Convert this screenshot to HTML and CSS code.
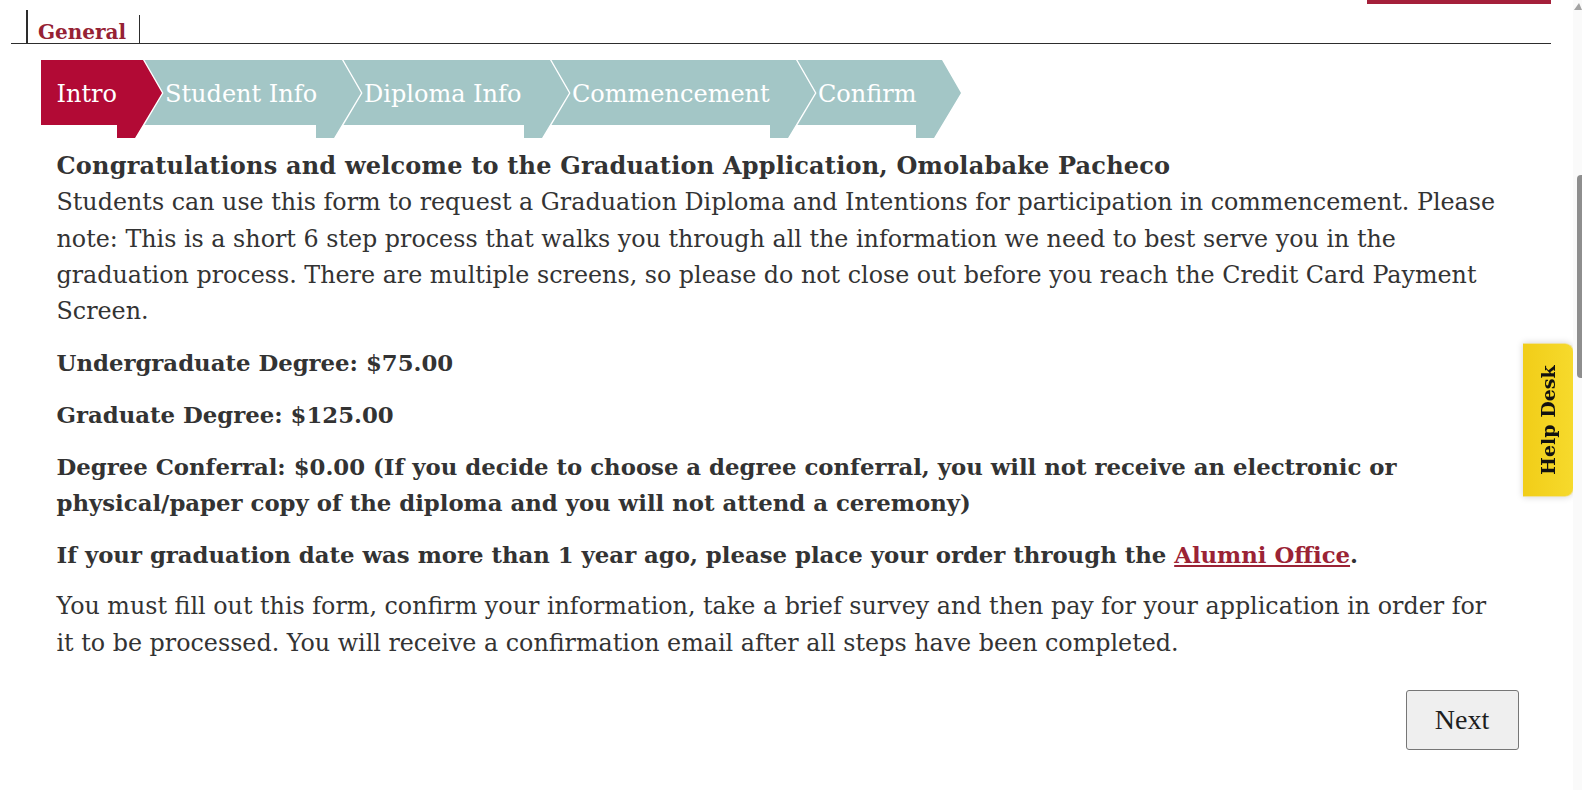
FILE: index.html
```html
<!DOCTYPE html>
<html lang="en">
<head>
<meta charset="utf-8">
<title>Graduation Application</title>
<link rel="stylesheet" href="styles.css">
</head>
<body>
<div class="page">
  <div class="accent-row"><span class="accent"></span></div>
  <div class="tabs">
    <span class="tab-edge"></span>
    <a class="tab" href="#">General</a>
  </div>
  <nav class="steps">
    <div class="step s1 active"><span>Intro</span></div>
    <div class="step s2"><span>Student Info</span></div>
    <div class="step s3"><span>Diploma Info</span></div>
    <div class="step s4"><span>Commencement</span></div>
    <div class="step s5"><span>Confirm</span></div>
  </nav>
  <div class="content">
    <p class="lead"><strong class="title">Congratulations and welcome to the Graduation Application, Omolabake Pacheco</strong>Students can use this form to request a Graduation Diploma and Intentions for participation in commencement. Please note: This is a short 6 step process that walks you through all the information we need to best serve you in the graduation process. There are multiple screens, so please do not close out before you reach the Credit Card Payment Screen.</p>
    <p class="b">Undergraduate Degree: $75.00</p>
    <p class="b">Graduate Degree: $125.00</p>
    <p class="b">Degree Conferral: $0.00 (If you decide to choose a degree conferral, you will not receive an electronic or physical/paper copy of the diploma and you will not attend a ceremony)</p>
    <p class="b">If your graduation date was more than 1 year ago, please place your order through the <a href="#">Alumni Office</a>.</p>
    <p class="last">You must fill out this form, confirm your information, take a brief survey and then pay for your application in order for it to be processed. You will receive a confirmation email after all steps have been completed.</p>
  </div>
  <div class="actions"><button type="button" class="btn">Next</button></div>
</div>
<div class="help">Help Desk</div>
<div class="scrollbar">
  <svg class="scroll-arrow" width="9" height="12" viewBox="0 0 9 12"><polygon points="1,10 6,3 9,10" fill="#a3a3a3"/></svg>
  <span class="thumb"></span>
</div>
</body>
</html>
```
FILE: styles.css
```css
html, body {
  margin: 0;
  padding: 0;
  overflow: hidden;
  background: #fff;
}
body {
  font-family: "DejaVu Serif", "Liberation Serif", serif;
  color: #333;
}
.page {
  width: 1540px;
  margin-left: 11px;
}
.accent-row {
  display: flex;
  justify-content: flex-end;
  height: 4px;
}
.accent {
  width: 184px;
  height: 4px;
  background: #a4203a;
}
.tabs {
  display: flex;
  align-items: flex-end;
  height: 39px;
  border-bottom: 1px solid #2d2d2d;
}
.tab-edge {
  width: 2px;
  height: 33px;
  margin-left: 15px;
  background: #2d2d2d;
}
.tab {
  display: block;
  height: 28px;
  box-sizing: border-box;
  padding: 4px 13px 0 10px;
  border-right: 1px solid #2d2d2d;
  color: #962234;
  font-weight: bold;
  font-size: 20px;
  line-height: 26px;
  text-decoration: none;
}
.steps {
  display: flex;
  margin: 16px 0 0 30px;
  height: 78px;
}
.step {
  height: 78px;
  flex: none;
  background: #a3c6c6;
  color: #fff;
  font-size: 24px;
  line-height: 65px;
  padding-top: 2px;
  white-space: nowrap;
  margin-left: -19px;
  padding-left: 22px;
  box-sizing: border-box;
  clip-path: polygon(1.5px 0, calc(100% - 19px) 0, 100% 33px, calc(100% - 27px) 78px, calc(100% - 45px) 78px, calc(100% - 45px) 65px, 1.5px 65px, 20.5px 33px);
}
.step.s1 {
  margin-left: 0;
  padding-left: 15.5px;
  clip-path: polygon(0 0, calc(100% - 19px) 0, 100% 33px, calc(100% - 27px) 78px, calc(100% - 45px) 78px, calc(100% - 45px) 65px, 0 65px);
}
.step.active { background: #b20a35; }
.s1 { width: 121px; }
.s2 { width: 218px; }
.s3 { width: 227px; }
.s4 { width: 265px; }
.s5 { width: 165px; }
.content {
  padding: 0 51px 0 45.5px;
  margin-top: 8.75px;
  font-size: 23.8px;
  line-height: 36.4px;
}
.content p {
  margin: 0 0 15.3px;
}
.content p.last { margin-bottom: 0; }
.title {
  display: block;
  font-size: 24px;
  letter-spacing: 0.2px;
  line-height: 37.5px;
}
.b {
  font-weight: bold;
  font-size: 22.8px;
}
.content a {
  color: #9b2335;
  text-decoration: underline;
}
.actions {
  display: flex;
  justify-content: flex-end;
  padding-right: 32.5px;
  margin-top: 29px;
}
.btn {
  width: 113px;
  height: 60px;
  box-sizing: border-box;
  border: 1px solid #767676;
  border-radius: 3px;
  background: #efefef;
  font-family: "Liberation Serif", serif;
  font-size: 28px;
  color: #1e1e1e;
  padding: 0;
}
.help {
  position: fixed;
  right: 8px;
  top: 343px;
  width: 51px;
  height: 154px;
  box-sizing: border-box;
  border-radius: 9px 0 0 9px;
  border: 1px solid #efe09a;
  border-right: none;
  background: linear-gradient(90deg, #f6da2c, #f1cd18);
  box-shadow: 0 0 7px rgba(0, 0, 0, 0.18);
  display: flex;
  align-items: center;
  justify-content: center;
  writing-mode: vertical-rl;
  transform: rotate(180deg);
  font-weight: bold;
  font-size: 19px;
  color: #111;
}
.scrollbar {
  position: fixed;
  top: 0;
  right: 0;
  width: 9px;
  height: 100%;
  background: #fafafa;
}
.scroll-arrow {
  position: absolute;
  top: 0;
  left: 0;
}
.thumb {
  position: absolute;
  top: 175px;
  left: 4px;
  width: 5px;
  height: 203px;
  border-radius: 4px 0 0 4px;
  background: #8e8e8e;
}
```
